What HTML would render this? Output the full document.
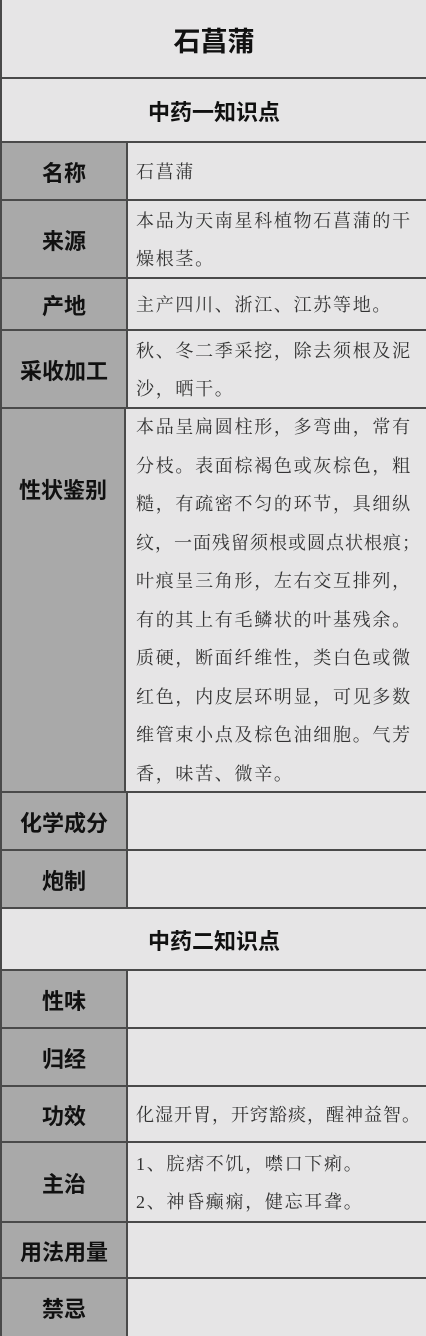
<!DOCTYPE html>
<html><head><meta charset="utf-8"><style>
body{margin:0;width:426px;height:1336px;background:#e6e5e6;position:relative;overflow:hidden}
.r{position:absolute;left:0;width:426px;border-top:2px solid #4a4a4a;box-sizing:border-box;border-left:2px solid #4a4a4a}
.h{background:#e6e5e6;display:flex;align-items:center;justify-content:center;font-family:"Liberation Sans","Noto Sans CJK SC",sans-serif;font-weight:bold;font-size:22px;color:#111}
.l{position:absolute;left:0;top:0;bottom:0;width:124px;background:#a9a9a9;border-right:2px solid #4a4a4a;display:flex;align-items:center;justify-content:center;font-family:"Liberation Sans","Noto Sans CJK SC",sans-serif;font-weight:bold;font-size:22px;color:#111}
.c{position:absolute;left:134px;right:0;top:0;bottom:0;display:flex;flex-direction:column;justify-content:center;font-family:"Liberation Serif","Noto Serif CJK SC",serif;font-size:18px;letter-spacing:1.7px;line-height:38px;color:#333;white-space:nowrap}
</style></head><body>
<div class="r h" style="top:0;height:78px;border-top:none;font-size:27px">石菖蒲</div>
<div class="r h" style="top:77px;height:65px">中药一知识点</div>
<div class="r" style="top:141px;height:59px"><div class="l">名称</div><div class="c">石菖蒲</div></div>
<div class="r" style="top:199px;height:79px"><div class="l">来源</div><div class="c"><div>本品为天南星科植物石菖蒲的干</div><div>燥根茎。</div></div></div>
<div class="r" style="top:277px;height:53px"><div class="l">产地</div><div class="c">主产四川、浙江、江苏等地。</div></div>
<div class="r" style="top:329px;height:79px"><div class="l">采收加工</div><div class="c"><div>秋、冬二季采挖，除去须根及泥</div><div>沙，晒干。</div></div></div>
<div class="r" style="top:407px;height:385px"><div class="l" style="align-items:flex-start;padding-top:64px;box-sizing:border-box">性状鉴别</div><div class="c" style="line-height:38.5px"><div>本品呈扁圆柱形，多弯曲，常有</div><div>分枝。表面棕褐色或灰棕色，粗</div><div>糙，有疏密不匀的环节，具细纵</div><div style="letter-spacing:1px">纹，一面残留须根或圆点状根痕；</div><div>叶痕呈三角形，左右交互排列，</div><div>有的其上有毛鳞状的叶基残余。</div><div>质硬，断面纤维性，类白色或微</div><div>红色，内皮层环明显，可见多数</div><div>维管束小点及棕色油细胞。气芳</div><div>香，味苦、微辛。</div></div></div>
<div class="r" style="top:791px;height:59px"><div class="l">化学成分</div></div>
<div class="r" style="top:849px;height:59px"><div class="l">炮制</div></div>
<div class="r h" style="top:907px;height:63px">中药二知识点</div>
<div class="r" style="top:969px;height:59px"><div class="l">性味</div></div>
<div class="r" style="top:1027px;height:59px"><div class="l">归经</div></div>
<div class="r" style="top:1085px;height:57px"><div class="l">功效</div><div class="c" style="letter-spacing:1px">化湿开胃，开窍豁痰，醒神益智。</div></div>
<div class="r" style="top:1141px;height:81px"><div class="l">主治</div><div class="c"><div>1、脘痞不饥，噤口下痢。</div><div>2、神昏癫痫，健忘耳聋。</div></div></div>
<div class="r" style="top:1221px;height:57px"><div class="l">用法用量</div></div>
<div class="r" style="top:1277px;height:59px"><div class="l">禁忌</div></div>
</body></html>
